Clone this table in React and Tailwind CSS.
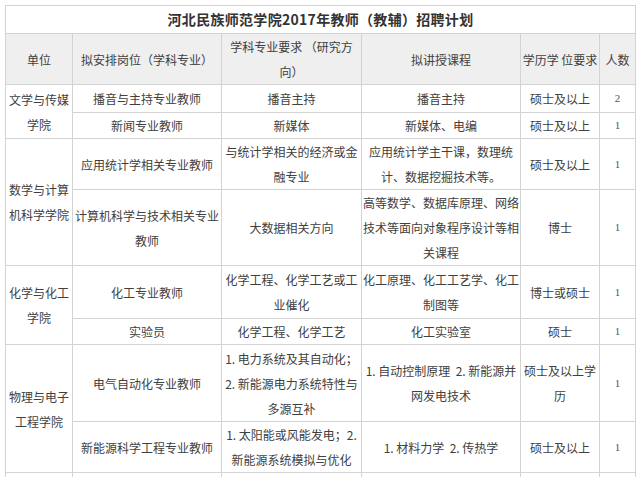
import React from "react";

const C = "border border-[#d3d3d3] text-center align-middle p-0";
const N = "border border-[#d3d3d3] text-center align-middle p-0 text-[11px] text-[#555] font-['Liberation_Serif',serif]";

export default function App() {
  return (
    <div className="bg-white w-[640px] h-[477px] overflow-hidden pt-[5px] pl-[5px] text-[#404040] text-[12px] leading-[25px]" style={{ fontFamily: '"Noto Sans CJK SC", "Noto Sans", sans-serif' }}>
      <table className="table-fixed border-collapse w-[630px]">
        <colgroup>
          <col className="w-[67px]" />
          <col className="w-[149px]" />
          <col className="w-[140px]" />
          <col className="w-[159px]" />
          <col className="w-[79px]" />
          <col className="w-[36px]" />
        </colgroup>
        <tbody>
          <tr className="h-[28px]">
            <td colSpan={6} className={`${C} text-[14px] font-bold text-[#333] tracking-[0.3px]`}>河北民族师范学院2017年教师（教辅）招聘计划</td>
          </tr>
          <tr className="h-[51px] bg-[#efefef]">
            <td className={C}>单位</td>
            <td className={C}>拟安排岗位（学科专业）</td>
            <td className={C}>学科专业要求 （研究方<br />向）</td>
            <td className={C}>拟讲授课程</td>
            <td className={C}>学历学 位要求</td>
            <td className={C}>人数</td>
          </tr>
          <tr className="h-[28px]">
            <td rowSpan={2} className={C}>文学与传媒<br />学院</td>
            <td className={C}>播音与主持专业教师</td>
            <td className={C}>播音主持</td>
            <td className={C}>播音主持</td>
            <td className={C}>硕士及以上</td>
            <td className={N}>2</td>
          </tr>
          <tr className="h-[25px]">
            <td className={C}>新闻专业教师</td>
            <td className={C}>新媒体</td>
            <td className={C}>新媒体、电编</td>
            <td className={C}>硕士及以上</td>
            <td className={N}>1</td>
          </tr>
          <tr className="h-[51px]">
            <td rowSpan={2} className={C}>数学与计算<br />机科学学院</td>
            <td className={C}>应用统计学相关专业教师</td>
            <td className={C}>与统计学相关的经济或金<br />融专业</td>
            <td className={C}>应用统计学主干课，数理统<br />计、数据挖掘技术等。</td>
            <td className={C}>硕士及以上</td>
            <td className={N}>1</td>
          </tr>
          <tr className="h-[76px]">
            <td className={C}>计算机科学与技术相关专业<br />教师</td>
            <td className={C}>大数据相关方向</td>
            <td className={C}>高等数学、数据库原理、网络<br />技术等面向对象程序设计等相<br />关课程</td>
            <td className={C}>博士</td>
            <td className={N}>1</td>
          </tr>
          <tr className="h-[53px]">
            <td rowSpan={2} className={C}>化学与化工<br />学院</td>
            <td className={C}>化工专业教师</td>
            <td className={C}>化学工程、化学工艺或工<br />业催化</td>
            <td className={C}>化工原理、化工工艺学、化工<br />制图等</td>
            <td className={C}>博士或硕士</td>
            <td className={N}>1</td>
          </tr>
          <tr className="h-[26px]">
            <td className={C}>实验员</td>
            <td className={C}>化学工程、化学工艺</td>
            <td className={C}>化工实验室</td>
            <td className={C}>硕士</td>
            <td className={N}>1</td>
          </tr>
          <tr className="h-[77px]">
            <td rowSpan={2} className={C}>物理与电子<br />工程学院</td>
            <td className={C}>电气自动化专业教师</td>
            <td className={C}>1. 电力系统及其自动化；<br />2. 新能源电力系统特性与<br />多源互补</td>
            <td className={C}>1. 自动控制原理&nbsp; 2. 新能源并<br />网发电技术</td>
            <td className={C}>硕士及以上学<br />历</td>
            <td className={N}>1</td>
          </tr>
          <tr className="h-[51px]">
            <td className={C}>新能源科学工程专业教师</td>
            <td className={C}>1. 太阳能或风能发电；2.<br />新能源系统模拟与优化</td>
            <td className={C}>1. 材料力学&nbsp; 2. 传热学</td>
            <td className={C}>硕士及以上</td>
            <td className={N}>1</td>
          </tr>
          <tr className="h-[30px]">
            <td className={C}></td>
            <td className={C}></td>
            <td className={C}></td>
            <td className={C}></td>
            <td className={C}></td>
            <td className={C}></td>
          </tr>
        </tbody>
      </table>
    </div>
  );
}
